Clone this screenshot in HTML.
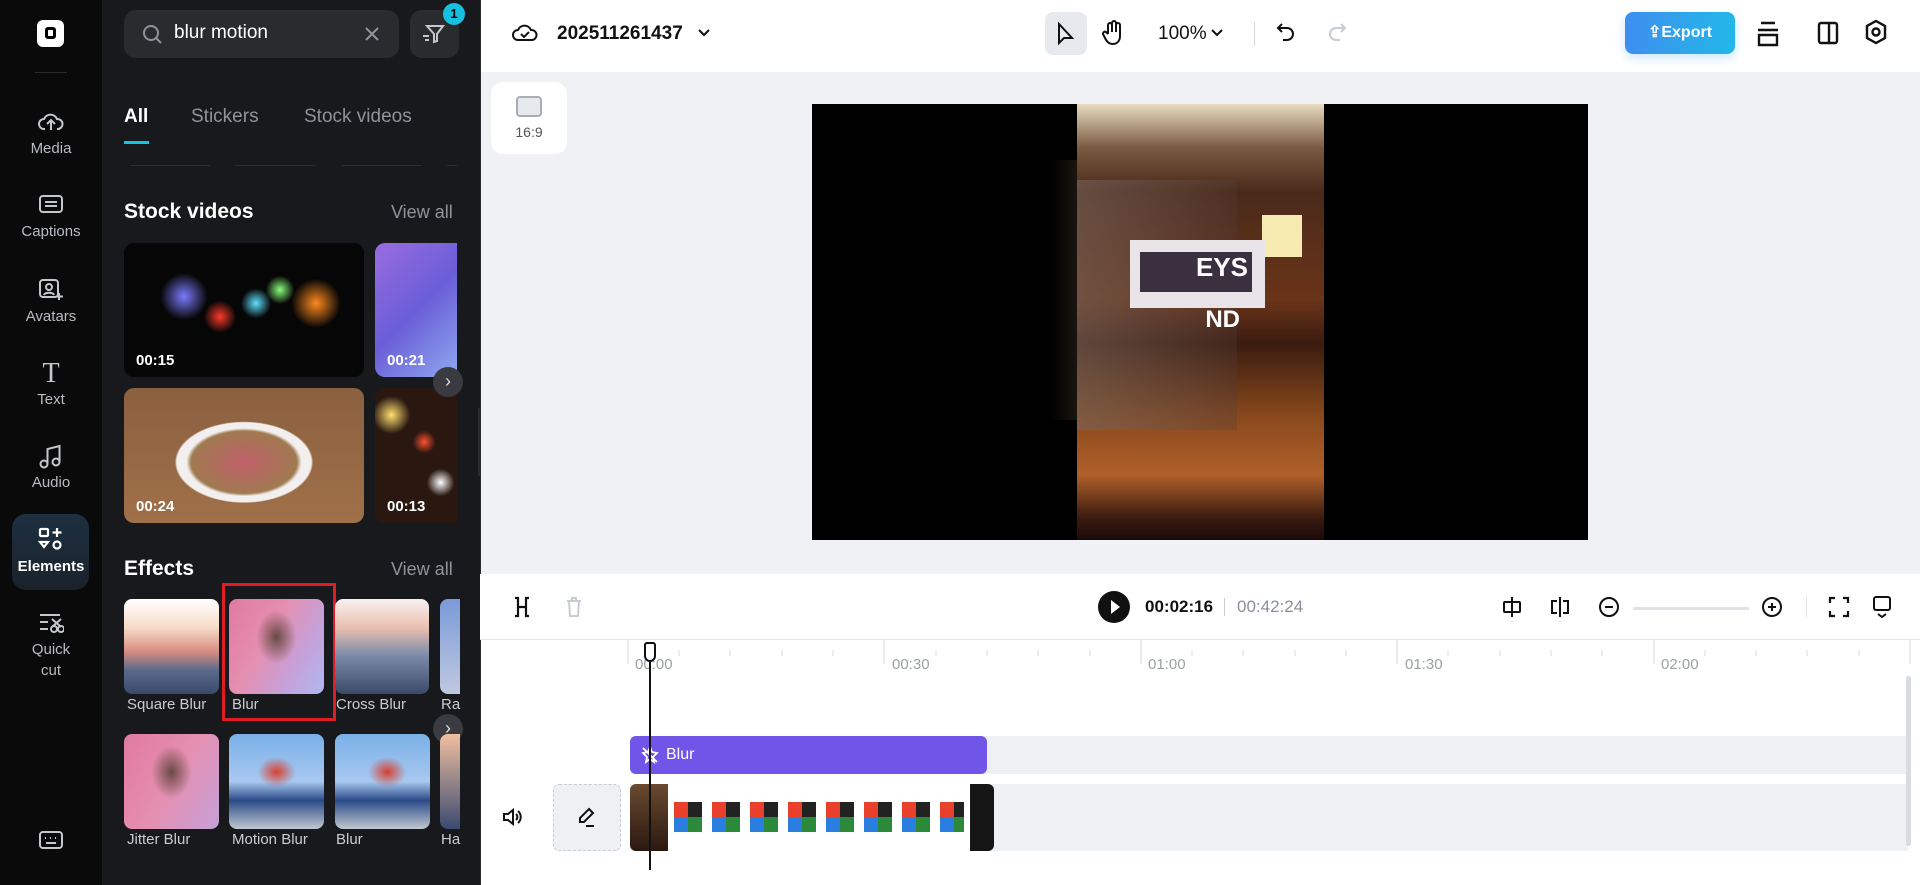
<!DOCTYPE html>
<html><head><meta charset="utf-8"><style>
*{box-sizing:border-box;margin:0;padding:0}
body{width:1920px;height:885px;overflow:hidden;font-family:"Liberation Sans",sans-serif;background:#fff;position:relative}
.a{position:absolute}
.nav{left:0;top:0;width:102px;height:885px;background:#0a0a0b}
.nl{position:absolute;width:102px;text-align:center;color:#b9bcc2;font-size:15px}
.panel{left:102px;top:0;width:378px;height:885px;background:#18191c;overflow:hidden}
.w{color:#fff}
.g{color:#8f939a}
.th{position:absolute;border-radius:10px;overflow:hidden}
.dur{position:absolute;left:12px;bottom:8px;color:#fff;font-size:15px;font-weight:bold}
.el{position:absolute;border-radius:8px}
.lab{position:absolute;color:#c9ccd1;font-size:15px;white-space:nowrap}
.ic{position:absolute}
</style></head><body>
<div class="a nav">
 <div class="a" style="left:37px;top:20px;width:27px;height:27px;background:#fff;border-radius:6px"><div class="a" style="left:8px;top:7px;width:11px;height:12px;border:3px solid #000;border-radius:3px"></div></div>
 <div class="a" style="left:35px;top:72px;width:32px;height:1px;background:#2a2b2e"></div>
 <svg class="ic" style="left:38px;top:110px" width="26" height="24" viewBox="0 0 26 24" fill="none" stroke="#c4c7cc" stroke-width="2"><path d="M7 19H6a5 5 0 0 1 0-10 7 7 0 0 1 13 0 5 5 0 0 1 1 10h-1"/><path d="M13 20v-9M9 14l4-4 4 4"/></svg>
 <div class="nl" style="top:140px">Media</div>
 <svg class="ic" style="left:38px;top:194px" width="26" height="20" viewBox="0 0 26 20" fill="none" stroke="#c4c7cc" stroke-width="2"><rect x="2" y="2" width="22" height="16" rx="3"/><path d="M7 8h12M7 12h12"/></svg>
 <div class="nl" style="top:223px">Captions</div>
 <svg class="ic" style="left:38px;top:278px" width="26" height="24" viewBox="0 0 26 24" fill="none" stroke="#c4c7cc" stroke-width="2"><rect x="2" y="2" width="18" height="17" rx="3"/><circle cx="11" cy="9" r="3"/><path d="M6 17c1-3 9-3 10 0M21 15v7M18 18.5h7"/></svg>
 <div class="nl" style="top:308px">Avatars</div>
 <div class="nl" style="top:358px;font-size:28px;color:#c4c7cc;font-family:'Liberation Serif',serif">T</div>
 <div class="nl" style="top:391px">Text</div>
 <svg class="ic" style="left:38px;top:444px" width="24" height="26" viewBox="0 0 24 26" fill="none" stroke="#c4c7cc" stroke-width="2"><circle cx="6" cy="20" r="3.5"/><circle cx="18" cy="18" r="3.5"/><path d="M9.5 20V5l12-3v16"/></svg>
 <div class="nl" style="top:474px">Audio</div>
 <div class="a" style="left:12px;top:514px;width:77px;height:76px;border-radius:14px;background:linear-gradient(180deg,#1d3040,#1a222b)"></div>
 <svg class="ic" style="left:38px;top:527px" width="26" height="24" viewBox="0 0 26 24" fill="none" stroke="#fff" stroke-width="2.2"><rect x="2" y="2" width="8" height="7" rx="1"/><path d="M19 1v9M14.5 5.5h9"/><path d="M2 15l4 5 4-5z"/><circle cx="19" cy="18" r="3.5"/></svg>
 <div class="nl" style="top:558px;color:#fff;font-weight:bold">Elements</div>
 <svg class="ic" style="left:38px;top:612px" width="26" height="22" viewBox="0 0 26 22" fill="none" stroke="#c4c7cc" stroke-width="2"><path d="M2 3h20M2 10h8M2 17h8"/><circle cx="16" cy="17" r="3"/><circle cx="23" cy="17" r="3"/><path d="M14 7l9 8M23 7l-9 8"/></svg>
 <div class="nl" style="top:641px">Quick</div>
 <div class="nl" style="top:662px">cut</div>
 <svg class="ic" style="left:38px;top:830px" width="26" height="20" viewBox="0 0 26 20" fill="none" stroke="#c4c7cc" stroke-width="2"><rect x="2" y="2" width="22" height="16" rx="3"/><path d="M7 8h1M12 8h1M17 8h1M8 13h10"/></svg>
</div>
<div class="a panel">
 <div class="a" style="left:22px;top:10px;width:275px;height:48px;background:#2a2b2f;border-radius:12px"></div>
 <svg class="ic" style="left:40px;top:24px" width="22" height="22" viewBox="0 0 22 22" fill="none" stroke="#8f939a" stroke-width="2"><circle cx="9" cy="9" r="7"/><path d="M14 14l5 5"/></svg>
 <div class="a w" style="left:72px;top:22px;font-size:19px">blur motion</div>
 <svg class="ic" style="left:262px;top:26px" width="16" height="16" viewBox="0 0 16 16" stroke="#8f939a" stroke-width="2"><path d="M2 2l12 12M14 2L2 14"/></svg>
 <div class="a" style="left:308px;top:10px;width:49px;height:48px;background:#2a2b2f;border-radius:12px"></div>
 <svg class="ic" style="left:320px;top:22px" width="24" height="24" viewBox="0 0 24 24" fill="none" stroke="#c4c7cc" stroke-width="2"><path d="M5 4h16l-6 8v7l-3 1v-8L5 4z"/><path d="M1 14h6M3 18h4"/></svg>
 <div class="a" style="left:341px;top:3px;width:22px;height:22px;border-radius:11px;background:#16c0e0;color:#000;font-size:13px;font-weight:bold;text-align:center;line-height:22px">1</div>
 <div class="a w" style="left:22px;top:106px;font-size:19px;font-weight:bold">All</div>
 <div class="a" style="left:22px;top:141px;width:25px;height:3px;background:#17c3e0"></div>
 <div class="a g" style="left:89px;top:106px;font-size:19px">Stickers</div>
 <div class="a g" style="left:202px;top:106px;font-size:19px">Stock videos</div>
 <div class="a" style="left:28px;top:165px;width:80px;height:1px;background:#2c2d31"></div>
 <div class="a" style="left:133px;top:165px;width:80px;height:1px;background:#2c2d31"></div>
 <div class="a" style="left:240px;top:165px;width:80px;height:1px;background:#2c2d31"></div>
 <div class="a" style="left:345px;top:165px;width:10px;height:1px;background:#2c2d31"></div>
 <div class="a w" style="left:22px;top:200px;font-size:21px;font-weight:bold">Stock videos</div>
 <div class="a g" style="left:289px;top:202px;font-size:18px">View all</div>
 <div class="th" style="left:22px;top:243px;width:240px;height:134px;background:radial-gradient(circle at 25% 40%,#7c7aff 0,transparent 12%),radial-gradient(circle at 55% 45%,#5fe0ff 0,transparent 10%),radial-gradient(circle at 80% 45%,#ff8a20 0,transparent 12%),radial-gradient(circle at 40% 55%,#ff3a2a 0,transparent 10%),radial-gradient(circle at 65% 35%,#8aff7a 0,transparent 8%),#060606"><div class="dur">00:15</div></div>
 <div class="th" style="left:273px;top:243px;width:82px;height:134px;border-radius:10px 0 0 10px;background:linear-gradient(135deg,#9a6ce0,#6a5ed8 50%,#8fa8ee)"><div class="dur">00:21</div></div>
 <div class="th" style="left:22px;top:388px;width:240px;height:135px;background:radial-gradient(ellipse 40% 42% at 50% 55%,#c0606a 0,#a07a50 55%,#f2efee 60%,#f2efee 70%,transparent 72%),linear-gradient(#8a6040,#a07048)"><div class="dur">00:24</div></div>
 <div class="th" style="left:273px;top:388px;width:82px;height:135px;border-radius:10px 0 0 10px;background:radial-gradient(circle at 20% 20%,#ffe070 0,transparent 15%),radial-gradient(circle at 60% 40%,#ff5030 0,transparent 12%),radial-gradient(circle at 80% 70%,#fff 0,transparent 12%),#2a1810"><div class="dur">00:13</div></div>
 <div class="a" style="left:331px;top:367px;width:30px;height:30px;border-radius:15px;background:#3a3b40;color:#ddd;text-align:center;line-height:28px;font-size:18px">›</div>
 <div class="a w" style="left:22px;top:557px;font-size:21px;font-weight:bold">Effects</div>
 <div class="a g" style="left:289px;top:559px;font-size:18px">View all</div>
 <div class="el" style="left:22px;top:599px;width:95px;height:95px;background:linear-gradient(180deg,#fff 0,#f6dcc8 30%,#d98c80 55%,#5a6a8a 75%,#3a4a6a)"></div>
 <div class="lab" style="left:25px;top:696px">Square Blur</div>
 <div class="el" style="left:127px;top:599px;width:95px;height:95px;background:radial-gradient(ellipse 30% 40% at 50% 40%,#6a4a45 0,transparent 70%),linear-gradient(120deg,#e07aa0,#e58fb0 40%,#c6a0d8 70%,#b0b8f0)"></div>
 <div class="lab" style="left:130px;top:696px">Blur</div>
 <div class="a" style="left:120px;top:583px;width:114px;height:138px;border:3px solid #e01d25"></div>
 <div class="el" style="left:233px;top:599px;width:94px;height:95px;background:linear-gradient(180deg,#f8f0f0 0,#eac0b0 30%,#7a8aa8 60%,#3a4a68)"></div>
 <div class="lab" style="left:234px;top:696px">Cross Blur</div>
 <div class="el" style="left:338px;top:599px;width:20px;height:95px;border-radius:8px 0 0 8px;background:linear-gradient(#7a9ad8,#c0c8e0)"></div>
 <div class="lab" style="left:339px;top:696px">Ra</div>
 <div class="a" style="left:331px;top:714px;width:30px;height:30px;border-radius:15px;background:#3a3b40;color:#ddd;text-align:center;line-height:28px;font-size:18px">›</div>
 <div class="el" style="left:22px;top:734px;width:95px;height:95px;background:radial-gradient(ellipse 30% 40% at 50% 40%,#6a4a45 0,transparent 70%),linear-gradient(120deg,#e07aa0,#e58fb0 50%,#c6a0d8)"></div>
 <div class="lab" style="left:25px;top:831px">Jitter Blur</div>
 <div class="el" style="left:127px;top:734px;width:95px;height:95px;background:radial-gradient(ellipse 25% 20% at 50% 40%,#d84030 0,transparent 80%),linear-gradient(180deg,#7ab0e8,#a8c8f0 50%,#2a4a88 70%,#c0c8d0)"></div>
 <div class="lab" style="left:130px;top:831px">Motion Blur</div>
 <div class="el" style="left:233px;top:734px;width:95px;height:95px;background:radial-gradient(ellipse 25% 20% at 55% 40%,#d84030 0,transparent 80%),linear-gradient(180deg,#7ab0e8,#a8c8f0 50%,#2a4a88 70%,#c0c8d0)"></div>
 <div class="lab" style="left:234px;top:831px">Blur</div>
 <div class="el" style="left:338px;top:734px;width:20px;height:95px;border-radius:8px 0 0 8px;background:linear-gradient(#f0c0a0,#3a4a70)"></div>
 <div class="lab" style="left:339px;top:831px">Ha</div>
</div>
<div class="a" style="left:478px;top:408px;width:11px;height:68px;background:#2a2b2e;border-radius:0 6px 6px 0"></div>
<div class="a" style="left:480px;top:72px;width:1440px;height:502px;background:#eff1f4"></div>
<div class="a" style="left:480px;top:0;width:1px;height:885px;background:#2a2b2e"></div>
<svg class="ic" style="left:512px;top:20px" width="26" height="24" viewBox="0 0 26 24" fill="none" stroke="#111" stroke-width="2"><path d="M7 20H6a5 5 0 0 1 0-10 7 7 0 0 1 13 0 5 5 0 0 1 1 10h-1z"/><path d="M9 14l3 3 5-5"/></svg>
<div class="a" style="left:557px;top:23px;font-size:19px;font-weight:bold;color:#111">202511261437</div>
<svg class="ic" style="left:697px;top:28px" width="14" height="10" viewBox="0 0 14 10" fill="none" stroke="#111" stroke-width="2"><path d="M2 2l5 5 5-5"/></svg>
<div class="a" style="left:1045px;top:12px;width:42px;height:43px;border-radius:8px;background:#e6e9ee"></div>
<svg class="ic" style="left:1056px;top:22px" width="20" height="24" viewBox="0 0 20 24" fill="none" stroke="#111" stroke-width="2"><path d="M3 2v19l5-5 8 0z"/></svg>
<svg class="ic" style="left:1102px;top:20px" width="22" height="26" viewBox="0 0 22 26" fill="none" stroke="#111" stroke-width="2"><path d="M6 14V5a2 2 0 0 1 4 0v7V3a2 2 0 0 1 4 0v9V5a2 2 0 0 1 4 0v11c0 5-3 8-7 8s-6-2-8-6l-2-4a2 2 0 0 1 3-2l2 2"/></svg>
<div class="a" style="left:1158px;top:23px;font-size:19px;color:#111">100%</div>
<svg class="ic" style="left:1210px;top:28px" width="14" height="10" viewBox="0 0 14 10" fill="none" stroke="#111" stroke-width="2"><path d="M2 2l5 5 5-5"/></svg>
<div class="a" style="left:1254px;top:22px;width:1px;height:24px;background:#d4d7dc"></div>
<svg class="ic" style="left:1276px;top:22px" width="20" height="22" viewBox="0 0 20 22" fill="none" stroke="#111" stroke-width="2"><path d="M6 2L2 6l4 4"/><path d="M2 6h9a6 6 0 0 1 0 12H7"/></svg>
<svg class="ic" style="left:1327px;top:22px" width="20" height="22" viewBox="0 0 20 22" fill="none" stroke="#c7ccd3" stroke-width="2"><path d="M14 2l4 4-4 4"/><path d="M18 6H9a6 6 0 0 0 0 12h4"/></svg>
<div class="a" style="left:1625px;top:12px;width:110px;height:42px;border-radius:8px;background:linear-gradient(90deg,#3e8ef0,#22b8e8);color:#fff;font-weight:bold;font-size:16px;line-height:42px;text-align:center;box-shadow:0 4px 10px rgba(60,160,240,.25)">⇪Export</div>
<svg class="ic" style="left:1756px;top:20px" width="24" height="28" viewBox="0 0 24 28" fill="none" stroke="#111" stroke-width="2.4"><path d="M5 3h14M2 10h20M3 15h18v10H3z"/></svg>
<svg class="ic" style="left:1816px;top:20px" width="24" height="26" viewBox="0 0 24 26" fill="none" stroke="#111" stroke-width="2.4"><rect x="3" y="3" width="18" height="20" rx="2"/><path d="M13 3v20"/></svg>
<svg class="ic" style="left:1864px;top:19px" width="24" height="28" viewBox="0 0 24 28" fill="none" stroke="#111" stroke-width="2.4"><path d="M12 2l9 5v12l-9 5-9-5V7z"/><circle cx="12" cy="13" r="3.5"/></svg>
<div class="a" style="left:491px;top:82px;width:76px;height:72px;background:#fff;border-radius:12px"></div>
<div class="a" style="left:516px;top:96px;width:26px;height:21px;border:2px solid #a8adb5;border-radius:4px;background:#e6e9ee"></div>
<div class="a" style="left:491px;top:124px;width:76px;text-align:center;font-size:14px;color:#555">16:9</div>
<div class="a" style="left:812px;top:104px;width:776px;height:436px;background:#000"></div>
<div class="a" style="left:1050px;top:160px;width:80px;height:260px;background:linear-gradient(90deg,transparent,rgba(150,120,90,.5))"></div>
<div class="a" style="left:1077px;top:104px;width:247px;height:436px;background:linear-gradient(180deg,#e8dcc0 0,#7a5a40 10%,#4a2a1a 20%,#6a3418 45%,#3a1c10 55%,#8a4a1c 72%,#b0602a 85%,#3a1a10 95%,#1a0a08)"></div>
<div class="a" style="left:1077px;top:180px;width:160px;height:250px;background:linear-gradient(90deg,rgba(120,100,90,.6),rgba(80,60,60,.3))"></div>
<div class="a" style="left:1262px;top:215px;width:40px;height:42px;background:#f6eab0"></div>
<div class="a" style="left:1130px;top:240px;width:135px;height:68px;background:#e8e4e8"></div>
<div class="a" style="left:1140px;top:252px;width:112px;height:40px;background:#3a3040;color:#fff;font-weight:bold;font-size:26px;text-align:right;padding-right:4px">EYS</div>
<div class="a" style="left:1140px;top:306px;width:100px;color:#fff;font-size:24px;font-weight:bold;text-align:right">ND</div>
<div class="a" style="left:480px;top:574px;width:1440px;height:66px;background:#fff;border-bottom:1px solid #e3e6ea"></div>
<svg class="ic" style="left:512px;top:596px" width="20" height="22" viewBox="0 0 20 22" fill="none" stroke="#111" stroke-width="2.2"><path d="M3 2h3v18H3M17 2h-3v18h3M6 11h8"/></svg>
<svg class="ic" style="left:565px;top:596px" width="18" height="22" viewBox="0 0 18 22" fill="none" stroke="#c7ccd3" stroke-width="2"><path d="M2 5h14M7 5V2h4v3M4 5l1 15h8l1-15"/></svg>
<div class="a" style="left:1098px;top:591px;width:32px;height:32px;border-radius:16px;background:#111"></div>
<div class="a" style="left:1111px;top:600px;width:0;height:0;border-left:9px solid #fff;border-top:7px solid transparent;border-bottom:7px solid transparent"></div>
<div class="a" style="left:1145px;top:597px;font-size:17px;font-weight:bold;color:#111">00:02:16</div>
<div class="a" style="left:1224px;top:598px;width:1px;height:18px;background:#c7ccd3"></div>
<div class="a" style="left:1237px;top:597px;font-size:17px;color:#8a9099">00:42:24</div>
<svg class="ic" style="left:1500px;top:595px" width="24" height="24" viewBox="0 0 24 24" fill="none" stroke="#111" stroke-width="2"><rect x="4" y="7" width="16" height="10" rx="1"/><path d="M12 2v20"/></svg>
<svg class="ic" style="left:1548px;top:595px" width="24" height="24" viewBox="0 0 24 24" fill="none" stroke="#111" stroke-width="2"><path d="M12 2v20M9 6H4v12h5M15 6h5v12h-5"/></svg>
<svg class="ic" style="left:1598px;top:596px" width="22" height="22" viewBox="0 0 22 22" fill="none" stroke="#111" stroke-width="2"><circle cx="11" cy="11" r="9"/><path d="M7 11h8"/></svg>
<div class="a" style="left:1633px;top:607px;width:116px;height:3px;background:#dfe3e8;border-radius:2px"></div>
<svg class="ic" style="left:1761px;top:596px" width="22" height="22" viewBox="0 0 22 22" fill="none" stroke="#111" stroke-width="2"><circle cx="11" cy="11" r="9"/><path d="M7 11h8M11 7v8"/></svg>
<div class="a" style="left:1806px;top:597px;width:1px;height:20px;background:#e0e3e7"></div>
<svg class="ic" style="left:1828px;top:596px" width="22" height="22" viewBox="0 0 22 22" fill="none" stroke="#111" stroke-width="2.2"><path d="M2 7V2h5M15 2h5v5M20 15v5h-5M7 20H2v-5"/></svg>
<svg class="ic" style="left:1871px;top:595px" width="22" height="24" viewBox="0 0 22 24" fill="none" stroke="#111" stroke-width="2"><rect x="3" y="2" width="16" height="13" rx="2"/><path d="M7 19l4 3 4-3"/></svg>
<svg class="a" style="left:480px;top:640px" width="1440" height="50">
<g stroke="#d6d9de" stroke-width="1">
<line x1="148" y1="0" x2="148" y2="24"/><line x1="404" y1="0" x2="404" y2="24"/><line x1="661" y1="0" x2="661" y2="24"/><line x1="917" y1="0" x2="917" y2="24"/><line x1="1174" y1="0" x2="1174" y2="24"/><line x1="1430" y1="0" x2="1430" y2="24"/>
</g>
<g stroke="#d6d9de" stroke-width="1">
<path d="M199 10v6M250 10v6M302 10v6M353 10v6M456 10v6M507 10v6M558 10v6M610 10v6M712 10v6M763 10v6M815 10v6M866 10v6M968 10v6M1020 10v6M1071 10v6M1122 10v6M1225 10v6M1276 10v6M1327 10v6M1379 10v6"/>
</g>
<g font-family="Liberation Sans" font-size="15" fill="#9aa0a8">
<text x="155" y="29">00:00</text><text x="412" y="29">00:30</text><text x="668" y="29">01:00</text><text x="925" y="29">01:30</text><text x="1181" y="29">02:00</text>
</g>
</svg>
<div class="a" style="left:630px;top:736px;width:1278px;height:38px;background:#eef1f4"></div>
<div class="a" style="left:630px;top:736px;width:357px;height:38px;background:#7055e8;border-radius:6px;color:#fff;font-size:16px;line-height:38px;padding-left:36px">Blur</div>
<svg class="ic" style="left:640px;top:745px" width="20" height="20" viewBox="0 0 20 20" fill="none" stroke="#fff" stroke-width="1.8"><path d="M10 2l2 5 5 1-4 4 1 5-4-3-4 3 1-5-4-4 5-1z"/><path d="M3 3l14 14"/></svg>
<div class="a" style="left:630px;top:784px;width:1278px;height:67px;background:#eef1f4"></div>
<div class="a" style="left:553px;top:784px;width:68px;height:67px;border:1px dashed #c8ccd2;border-radius:6px;background:#eef1f4"></div>
<svg class="ic" style="left:576px;top:806px" width="20" height="22" viewBox="0 0 20 22" fill="none" stroke="#111" stroke-width="2"><path d="M13 3l4 4-9 9H4v-4z"/><path d="M10 20h8"/></svg>
<svg class="ic" style="left:501px;top:806px" width="22" height="22" viewBox="0 0 22 22" fill="none" stroke="#111" stroke-width="2"><path d="M3 8h4l5-4v14l-5-4H3z"/><path d="M15 8a4 4 0 0 1 0 6M17 5a8 8 0 0 1 0 12"/></svg>
<div class="a" style="left:630px;top:784px;width:364px;height:67px;background:#fff;border-radius:6px;overflow:hidden">
 <div class="a" style="left:0;top:0;width:38px;height:67px;background:linear-gradient(#6a4a30,#2a1810)"></div>
 <div class="a" style="left:340px;top:0;width:24px;height:67px;background:#151515"></div>
 <div class="a" style="left:44px;top:18px;width:290px;height:30px;background:repeating-linear-gradient(90deg,#e8402a 0,#e8402a 14px,#222 14px,#222 28px,#fff 28px,#fff 38px)"></div>
 <div class="a" style="left:44px;top:33px;width:290px;height:15px;background:repeating-linear-gradient(90deg,#2a7ee0 0,#2a7ee0 14px,#2a8a3a 14px,#2a8a3a 28px,#fff 28px,#fff 38px)"></div>
</div>
<div class="a" style="left:1906px;top:676px;width:5px;height:170px;background:#d8dbe0;border-radius:3px"></div>
<div class="a" style="left:649px;top:645px;width:1.5px;height:225px;background:#111"></div>
<div class="a" style="left:644px;top:642px;width:12px;height:20px;border:2px solid #111;border-radius:3px 3px 6px 6px;background:#fff"></div>
</body></html>
